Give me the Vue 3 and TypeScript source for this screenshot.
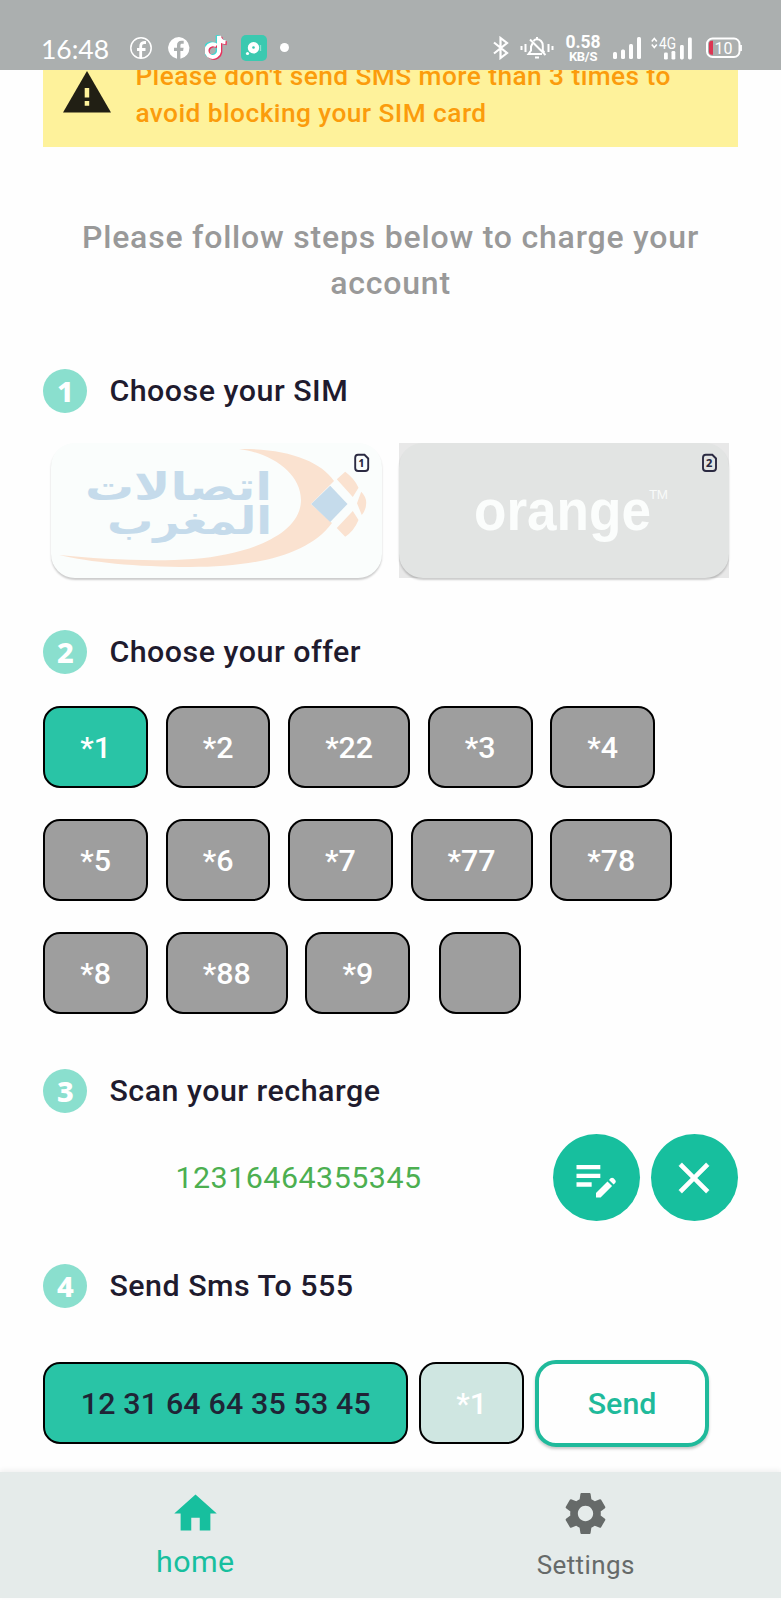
<script setup lang="ts">
import { ref } from 'vue'

const rows: string[][] = [
  ['*1', '*2', '*22', '*3', '*4'],
  ['*5', '*6', '*7', '*77', '*78'],
  ['*8', '*88', '*9', ''],
]
const selected = ref('*1')
const code = ref('12316464355345')
</script>

<template>
  <div class="screen">
    <header class="status">
      <span class="clock">16:48</span>
      <svg class="i-fb" width="22" height="22" viewBox="0 0 22 22">
        <circle cx="11" cy="11" r="10.2" fill="none" stroke="#fff" stroke-width="1.5" />
        <path d="M10.700 21V9.500c0-2.600 1.200-4 3.500-4h1.800M7 12.500h8.500" fill="none" stroke="#fff" stroke-width="2.800" />
      </svg>
      <svg class="i-fb2" width="22" height="22" viewBox="0 0 22 22">
        <path fill="#fff" d="M11 0a11 11 0 0 0-2 21.8V14H6v-3.300h3V8.300C9 5.300 10.700 3.700 13.500 3.700h2.200v3h-1.600c-1.300 0-1.700.7-1.700 1.600v2.400h3.200l-.5 3.300h-2.700v7.800A11 11 0 0 0 11 0z" />
      </svg>
      <svg class="i-tt" width="24" height="28" viewBox="0 0 24 28">
        <g fill="none" stroke-width="4">
          <path stroke="#3ed8d2" d="M11.500 11.500a6.300 6.300 0 1 0 2.500 6V2c.5 3.500 3 6 6.500 6.300" transform="translate(-1.300 -.8)" />
          <path stroke="#e8315d" d="M11.500 11.500a6.300 6.300 0 1 0 2.500 6V2c.5 3.500 3 6 6.500 6.300" transform="translate(1.300 1)" />
          <path stroke="#fff" d="M11.500 11.500a6.300 6.300 0 1 0 2.500 6V2c.5 3.500 3 6 6.500 6.300" />
        </g>
      </svg>
      <svg class="i-app" width="26" height="26" viewBox="0 0 26 26">
        <rect width="26" height="26" rx="5" fill="#3bc9b0" />
        <circle cx="12.500" cy="12.800" r="5.700" fill="#fff" />
        <circle cx="6.500" cy="18.500" r="1.600" fill="#fff" />
        <circle cx="12.500" cy="12.500" r="1.300" fill="#3bc9b0" />
        <path d="M19.500 10v6" stroke="#8fe0d2" stroke-width="1.300" />
      </svg>
      <i class="dot"></i>
      <span class="grow"></span>
      <svg class="i-bt" width="18" height="24" viewBox="0 0 18 24">
        <path d="M2 6.500l13 10.500-6.500 5V2l6.500 5L2 17.500" fill="none" stroke="#fff" stroke-width="2.200" />
      </svg>
      <svg class="i-bell" width="34" height="24" viewBox="0 0 34 24" fill="none" stroke="#fff" stroke-width="2">
        <path d="M1.500 10v4M5.500 8v8M28.500 8v8M32.500 10v4" />
        <path d="M12.500 7.500l-1.500 3v4L8.500 18H22M13.500 5c1-1.200 2.200-1.700 3.500-1.700 3 0 5.800 2.500 5.800 6.500v4.500l1.500 2.200M17 1v2M15 21.500h4M10 3.500l15.500 15.500" />
      </svg>
      <div class="speed"><b>0.58</b><small>KB/S</small></div>
      <svg class="i-sig" width="28" height="22" viewBox="0 0 28 22" fill="#fff">
        <rect x="0" y="15" width="4" height="7" rx="1.500" /><rect x="8" y="12.500" width="4" height="9.500" rx="1.500" />
        <rect x="16" y="7" width="4" height="15" rx="1.500" /><rect x="24" y="0" width="4" height="22" rx="1.500" />
      </svg>
      <svg class="i-4g" width="41" height="24" viewBox="0 0 41 24" fill="#fff">
        <path d="M.8 5.500l2.500-3 2.500 3M.8 8.500l2.500 3 2.500-3" fill="none" stroke="#fff" stroke-width="1.600" />
        <text x="8" y="12.800" font-size="16.500" font-family="Roboto, sans-serif" textLength="17" lengthAdjust="spacingAndGlyphs">4G</text>
        <rect x="13" y="16.500" width="3.800" height="7" rx="1.300" /><rect x="20.500" y="15" width="3.800" height="8.500" rx="1.300" />
        <rect x="29" y="9" width="3.800" height="14.500" rx="1.400" /><rect x="37" y="1.500" width="3.800" height="22" rx="1.400" />
      </svg>
      <svg class="i-bat" width="37" height="22" viewBox="0 0 37 22">
        <rect x="1" y="1.500" width="32.500" height="18.500" rx="5.500" fill="none" stroke="#fff" stroke-width="2" />
        <path d="M35 8v6" stroke="#fff" stroke-width="1.800" />
        <path d="M7 3.800v14H6a3 3 0 0 1-3-3v-8a3 3 0 0 1 3-3z" fill="#dc3553" />
        <text x="8.500" y="16.500" fill="#fff" font-size="16" font-family="Roboto, sans-serif">10</text>
      </svg>
    </header>

    <main class="body">
      <section class="warning">
        <svg class="tri" width="48" height="42" viewBox="0 0 48 42">
          <path d="M24 0l24 41.500H0z" fill="#211f14" />
          <path d="M21.700 17h4.500v9.500h-4.500zM21.700 30h4.500v4.700h-4.500z" fill="#fef29b" />
        </svg>
        <p>Please don't send SMS more than 3 times to<br>avoid blocking your SIM card</p>
      </section>

      <h1>Please follow steps below to charge your<br>account</h1>

      <h2 class="step"><b>1</b><span>Choose your SIM</span></h2>
      <div class="sims">
        <div class="sim">
          <svg width="331" height="135" viewBox="0 0 331 135">
            <path fill="#fae2d0" d="M188 6C235 5 270 18 283 38L260 61 281 80C257 113 202 124 139 124 85 124 38 119 8 112 48 116 100 119 142 116 202 111 250 90 250 57 250 30 220 10 188 6z" />
            <path fill="#c5dbeb" d="M279.200 42.700L296.500 61 279.200 79 260.200 61z" />
            <path fill="#fae2d0" d="M285.800 36.300L294.200 28.700Q304 36 307.500 44.700L301.800 54zM310.200 48.700Q315.500 54 315.200 60.300 315 67 310.800 72L306 60.300zM301.800 68L307.500 77Q303 88 294.200 93.700L285.800 85z" />
            <g fill="#c5dbeb" font-family="'DejaVu Sans', sans-serif" font-weight="700" font-size="38" direction="rtl">
              <text x="221" y="57" textLength="187" lengthAdjust="spacingAndGlyphs">اتصالات</text>
              <text x="221" y="91" textLength="165" lengthAdjust="spacingAndGlyphs">المغرب</text>
            </g>
            <path d="M307 11.800h6.500l3.700 3.700v9.500q0 3-3 3h-7q-3 0-3-3V14.800q0-3 2.800-3z" fill="none" stroke="#2b2a42" stroke-width="1.900" />
            <text x="310.500" y="23.500" text-anchor="middle" font-family="'Noto Sans', sans-serif" font-size="10" font-weight="800" fill="#2b2a42">1</text>
          </svg>
        </div>
        <div class="sim-bg">
          <div class="sim orange">
            <svg width="330" height="135" viewBox="0 0 330 135">
              <text x="75" y="87" textLength="177" lengthAdjust="spacingAndGlyphs" font-family="'Liberation Sans', sans-serif" font-weight="700" font-size="57" fill="#fbfdfc">orange</text>
              <text x="250" y="56" textLength="19" font-family="'Liberation Sans', sans-serif" font-size="13.500" fill="#f8faf9">TM</text>
              <path d="M306.800 11.800h6.500l3.700 3.700v9.500q0 3-3 3h-7q-3 0-3-3V14.800q0-3 2.800-3z" fill="none" stroke="#2b2a42" stroke-width="1.900" />
              <text x="310.300" y="23.800" text-anchor="middle" font-family="'Noto Sans', sans-serif" font-size="11" font-weight="800" fill="#2b2a42">2</text>
            </svg>
          </div>
        </div>
      </div>

      <h2 class="step"><b>2</b><span>Choose your offer</span></h2>
      <div class="offers">
        <div v-for="(row, r) in rows" :key="r" class="row">
          <button
            v-for="offer in row" :key="offer" type="button" class="chip"
            :class="{ on: offer === selected, long: offer.length === 3, blank: !offer }"
            @click="selected = offer"
          >{{ offer }}</button>
        </div>
      </div>

      <h2 class="step"><b>3</b><span>Scan your recharge</span></h2>
      <div class="scan">
        <span class="code">{{ code }}</span>
        <button type="button" class="round">
          <svg width="52" height="52" viewBox="0 0 24 24" fill="#fff">
            <path d="M3 10h11v2H3v-2zm0-2h11V6H3v2zm0 8h7v-2H3v2zm15.010-3.130.71-.71c.39-.39 1.020-.39 1.410 0l.71.71c.39.39.39 1.020 0 1.410l-.71.71-2.120-2.120zm-.71.71-5.300 5.300V21h2.120l5.300-5.300-2.120-2.120z" />
          </svg>
        </button>
        <button type="button" class="round">
          <svg width="52" height="52" viewBox="0 0 24 24" fill="#fff" stroke="#fff" stroke-width=".2">
            <path d="M19 6.410 17.590 5 12 10.590 6.410 5 5 6.410 10.590 12 5 17.590 6.410 19 12 13.410 17.590 19 19 17.590 13.410 12z" />
          </svg>
        </button>
      </div>

      <h2 class="step"><b>4</b><span>Send Sms To 555</span></h2>
      <div class="send-row">
        <div class="chip on number">12 31 64 64 35 53 45</div>
        <div class="chip faded">{{ selected }}</div>
        <button type="button" class="send">Send</button>
      </div>
    </main>

    <nav class="tabs">
      <a class="tab active">
        <svg width="51" height="51" viewBox="0 0 24 24" fill="currentColor"><path d="M10 20v-6h4v6h5v-8h3L12 3 2 12h3v8z" /></svg>
        <span>home</span>
      </a>
      <a class="tab">
        <svg width="51" height="51" viewBox="0 0 24 24" fill="currentColor"><path d="M19.140 12.940c.04-.3.06-.61.06-.94 0-.32-.02-.64-.07-.94l2.030-1.580c.18-.14.23-.41.12-.61l-1.920-3.320c-.12-.22-.37-.29-.59-.22l-2.390.96c-.5-.38-1.030-.7-1.620-.94l-.36-2.540c-.04-.24-.24-.41-.48-.41h-3.840c-.24 0-.43.17-.47.41l-.36 2.540c-.59.24-1.130.57-1.620.94l-2.390-.96c-.22-.08-.47 0-.59.22L2.740 8.870c-.12.21-.08.47.12.61l2.030 1.580c-.05.3-.09.63-.09.94s.02.64.07.94l-2.030 1.580c-.18.14-.23.41-.12.61l1.920 3.320c.12.22.37.29.59.22l2.390-.96c.5.38 1.030.7 1.620.94l.36 2.540c.05.24.24.41.48.41h3.840c.24 0 .44-.17.47-.41l.36-2.540c.59-.24 1.130-.56 1.620-.94l2.390.96c.22.08.47 0 .59-.22l1.920-3.320c.12-.22.07-.47-.12-.61l-2.010-1.580zM12 15.600c-1.980 0-3.600-1.620-3.600-3.600s1.620-3.600 3.600-3.600 3.600 1.620 3.600 3.600-1.620 3.600-3.600 3.600z" /></svg>
        <span>Settings</span>
      </a>
    </nav>
  </div>
</template>

<style>
body { margin: 0; background: #fefefe; }
</style>

<style scoped>
.screen {
  width: 781px;
  height: 1600px;
  display: flex;
  flex-direction: column;
  overflow: hidden;
  background: #fefefe;
  font-family: Roboto, sans-serif;
  color: #1f1b2e;
}
.screen * { box-sizing: border-box; }
button { font: inherit; padding: 0; margin: 0; }
svg { display: block; flex: none; }

.status {
  height: 69.500px;
  flex: none;
  background: #abafaf;
  color: #fff;
  display: flex;
  align-items: flex-start;
  padding: 0 39px 0 41px;
}
.clock { font: 400 26.500px/30px Lato, sans-serif; width: 68px; margin-top: 34px; white-space: nowrap; }
.i-fb { margin: 37px 0 0 21px; }
.i-fb2 { margin: 37px 0 0 16px; }
.i-tt { margin: 34px 0 0 15px; }
.i-app { margin: 35px 0 0 12px; }
.dot { width: 9px; height: 9px; border-radius: 50%; background: #fff; margin: 43px 0 0 13px; }
.grow { flex: 1; }
.i-bt { margin: 36px 10px 0 0; }
.i-bell { margin: 36px 11px 0 0; }
.speed { width: 36px; margin: 34px 12px 0 0; display: flex; flex-direction: column; align-items: center; }
.speed b { font: 700 17.500px/17px Roboto, sans-serif; }
.speed small { font: 700 13px/11px Roboto, sans-serif; letter-spacing: -.3px; }
.i-sig { margin: 37px 10px 0 0; }
.i-4g { margin: 36px 14px 0 0; }
.i-bat { margin: 37px -1px 0 0; }

.body { flex: 1; min-height: 0; padding: 0 43.400px; }
.warning {
  height: 77.500px;
  background: #fef29b;
  display: flex;
  align-items: flex-end;
  overflow: hidden;
  padding: 0 0 16px 20px;
}
.tri { margin-bottom: 18px; }
.warning p {
  margin: 0 0 0 24px;
  font-weight: 500;
  font-size: 26.300px;
  line-height: 36.500px;
  letter-spacing: .43px;
  white-space: nowrap;
  color: #fb9c0c;
}
h1 {
  margin: 67px 0 0;
  text-align: center;
  font-weight: 500;
  font-size: 32px;
  line-height: 46px;
  letter-spacing: .8px;
  white-space: nowrap;
  color: #999;
}
.step { display: flex; align-items: center; height: 44px; margin: 63px 0 0; font-size: 30.400px; font-weight: 500; letter-spacing: .5px; }
.step span { margin-top: -1px; }
.step b {
  width: 44px;
  height: 44px;
  border-radius: 50%;
  background: #8adfce;
  color: #fff;
  text-align: center;
  font: 800 29px/43px 'Noto Sans', sans-serif;
  letter-spacing: 0;
  margin-right: 22px;
}
.sims { display: flex; gap: 17px; margin: 30px 0 0 8px; }
.sim { width: 331px; height: 135px; border-radius: 24px; background: #fafdfc; box-shadow: 0 2px 2px rgba(0, 0, 0, .2); }
.sim-bg { background: #e8e8e8; width: 330px; height: 135px; }
.sim.orange { width: 330px; background: #e2e4e3; }
.sims + .step { margin-top: 52px; }

.offers { display: flex; flex-direction: column; gap: 31px; margin-top: 32px; }
.row { display: flex; gap: 17.700px; }
.chip {
  width: 104.700px;
  height: 82px;
  flex: none;
  border: 2px solid #000;
  border-radius: 17px;
  background: #9e9e9e;
  color: #fff;
  font-size: 30.400px;
  font-weight: 500;
  display: flex;
  align-items: center;
  justify-content: center;
}
.long { width: 122px; }
.blank { width: 82px; margin-left: 11.300px; }
.chip.on { background: #29c4a6; }
.offers + .step { margin-top: 55px; }

.scan { display: flex; align-items: center; margin-top: 21px; gap: 11px; }
.code { flex: 1; padding-left: 12px; text-align: center; font-size: 30.400px; color: #4caf50; letter-spacing: .5px; }
.round {
  width: 87px;
  height: 87px;
  border: 0;
  border-radius: 50%;
  background: #17bf9e;
  display: flex;
  align-items: center;
  justify-content: center;
}
.scan + .step { margin-top: 43px; }
.send-row { display: flex; align-items: flex-start; gap: 11px; margin-top: 52px; }
.send-row .chip { margin-top: 2px; }
.number { width: 365px; color: #1f2436; letter-spacing: .15px; }
.faded { background: #cfe6e1; }
.send {
  width: 174px;
  height: 87px;
  border: 4px solid #1fba9b;
  border-radius: 21px;
  background: #fefefe;
  box-shadow: 0 2px 3px rgba(0, 0, 0, .22);
  color: #1fba9b;
  font-size: 30.400px;
  font-weight: 500;
}

.tabs {
  height: 126px;
  margin-bottom: 2px;
  flex: none;
  display: flex;
  background: #e5ebea;
  box-shadow: 0 -2px 5px rgba(0, 0, 0, .06);
}
.tab { flex: 1; display: flex; flex-direction: column; align-items: center; padding-top: 16px; color: #666a69; font-size: 26px; letter-spacing: .4px; line-height: 30px; }
.tab span { margin-top: 11px; }
.tab.active { color: #17bf9e; font-size: 30.400px; }
.tab.active span { margin-top: 8px; }
</style>
